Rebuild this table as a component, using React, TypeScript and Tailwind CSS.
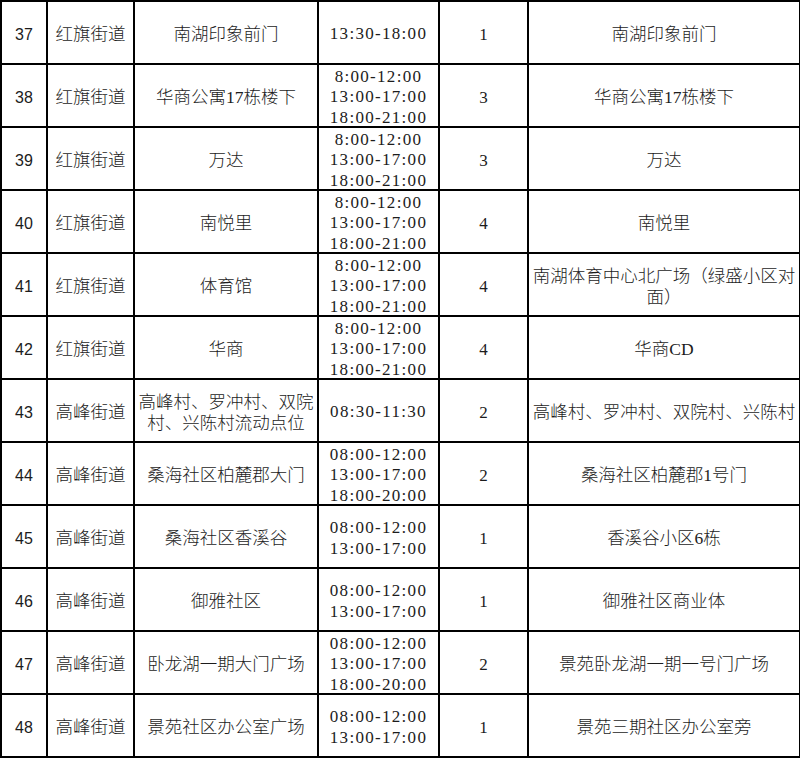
import React from 'react';

type Row = {
  no: number;
  street: string;
  site: string;
  times: string[];
  count: number;
  place: string;
};

const T3 = ['8:00-12:00', '13:00-17:00', '18:00-21:00'];

const rows: Row[] = [
  { no: 37, street: '红旗街道', site: '南湖印象前门', times: ['13:30-18:00'], count: 1, place: '南湖印象前门' },
  { no: 38, street: '红旗街道', site: '华商公寓17栋楼下', times: T3, count: 3, place: '华商公寓17栋楼下' },
  { no: 39, street: '红旗街道', site: '万达', times: T3, count: 3, place: '万达' },
  { no: 40, street: '红旗街道', site: '南悦里', times: T3, count: 4, place: '南悦里' },
  { no: 41, street: '红旗街道', site: '体育馆', times: T3, count: 4, place: '南湖体育中心北广场（绿盛小区对面）' },
  { no: 42, street: '红旗街道', site: '华商', times: T3, count: 4, place: '华商CD' },
  { no: 43, street: '高峰街道', site: '高峰村、罗冲村、双院村、兴陈村流动点位', times: ['08:30-11:30'], count: 2, place: '高峰村、罗冲村、双院村、兴陈村' },
  { no: 44, street: '高峰街道', site: '桑海社区柏麓郡大门', times: ['08:00-12:00', '13:00-17:00', '18:00-20:00'], count: 2, place: '桑海社区柏麓郡1号门' },
  { no: 45, street: '高峰街道', site: '桑海社区香溪谷', times: ['08:00-12:00', '13:00-17:00'], count: 1, place: '香溪谷小区6栋' },
  { no: 46, street: '高峰街道', site: '御雅社区', times: ['08:00-12:00', '13:00-17:00'], count: 1, place: '御雅社区商业体' },
  { no: 47, street: '高峰街道', site: '卧龙湖一期大门广场', times: ['08:00-12:00', '13:00-17:00', '18:00-20:00'], count: 2, place: '景苑卧龙湖一期一号门广场' },
  { no: 48, street: '高峰街道', site: '景苑社区办公室广场', times: ['08:00-12:00', '13:00-17:00'], count: 1, place: '景苑三期社区办公室旁' },
];

const serif = "font-['Liberation_Serif','Noto_Sans_CJK_SC',serif]";
const cjk = `${serif} text-[17.5px] leading-[21px] font-light`;

const Cell = ({ children, className = '' }: { children: React.ReactNode; className?: string }) => (
  <td className="border-2 border-black p-0 align-middle">
    <div className={`flex h-[61px] flex-col items-center justify-center overflow-hidden px-[3px] pt-[4px] text-center ${className}`}>
      {children}
    </div>
  </td>
);

const App = () => {
  return (
    <div className="h-[759px] w-[800px] overflow-hidden bg-white text-[#1c1c1c]">
      <table className="w-[799px] table-fixed border-collapse">
        <colgroup>
          <col className="w-[46px]" />
          <col className="w-[87px]" />
          <col className="w-[184px]" />
          <col className="w-[121px]" />
          <col className="w-[89px]" />
          <col className="w-[272px]" />
        </colgroup>
        <tbody>
          {rows.map((r) => (
            <tr key={r.no}>
              <Cell className="font-['Liberation_Sans',sans-serif] text-[16px]">{r.no}</Cell>
              <Cell className={cjk}>{r.street}</Cell>
              <Cell className={cjk}>{r.site}</Cell>
              <Cell className={`${serif} text-[17px] leading-[20.5px] tracking-[1.3px]`}>
                {r.times.map((t) => (
                  <span key={t} className="block whitespace-nowrap">{t}</span>
                ))}
              </Cell>
              <Cell className={`${serif} text-[17px]`}>{r.count}</Cell>
              <Cell className={cjk}>{r.place}</Cell>
            </tr>
          ))}
        </tbody>
      </table>
    </div>
  );
};

export default App;
